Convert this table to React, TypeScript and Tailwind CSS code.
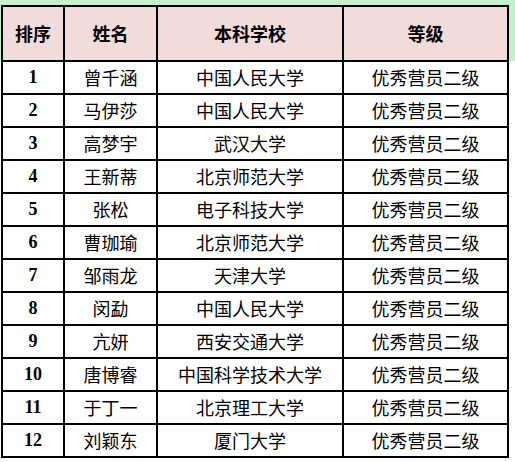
import React from 'react';

const rows = [
  { no: '1', name: '曾千涵', school: '中国人民大学' },
  { no: '2', name: '马伊莎', school: '中国人民大学' },
  { no: '3', name: '高梦宇', school: '武汉大学' },
  { no: '4', name: '王新蒂', school: '北京师范大学' },
  { no: '5', name: '张松', school: '电子科技大学' },
  { no: '6', name: '曹珈瑜', school: '北京师范大学' },
  { no: '7', name: '邹雨龙', school: '天津大学' },
  { no: '8', name: '闵勐', school: '中国人民大学' },
  { no: '9', name: '亢妍', school: '西安交通大学' },
  { no: '10', name: '唐博睿', school: '中国科学技术大学' },
  { no: '11', name: '于丁一', school: '北京理工大学' },
  { no: '12', name: '刘颖东', school: '厦门大学' },
];

const cjk = "font-['Noto_Sans_CJK_SC',sans-serif]";
const cell = 'flex items-center justify-center border-b-2 border-black';

const App = () => {
  return (
    <div className="h-[462px] w-[515px] bg-[linear-gradient(to_bottom,#c6efce_61px,#ffffff_61px)]">
      <div className="grid h-[5px] grid-cols-[64px_93px_186px_172px]">
        <div className="border-r border-[#dcf4e0]" />
        <div className="border-r border-[#dcf4e0]" />
        <div className="border-r border-[#dcf4e0]" />
        <div />
      </div>
      <div className="ml-[1px] w-[508px] border-l-2 border-r-2 border-t-2 border-black">
        <div className="grid grid-cols-[62px_93px_186px_163px] grid-rows-[55px] auto-rows-[33px] bg-white text-black">
          <div className={`${cell} ${cjk} border-r-2 bg-[#f2dcdb] text-[18px] font-bold`}>排序</div>
          <div className={`${cell} ${cjk} border-r-2 bg-[#f2dcdb] text-[18px] font-bold`}>姓名</div>
          <div className={`${cell} ${cjk} border-r-2 bg-[#f2dcdb] text-[18px] font-bold`}>本科学校</div>
          <div className={`${cell} ${cjk} bg-[#f2dcdb] text-[18px] font-bold`}>等级</div>
          {rows.map((row) => (
            <React.Fragment key={row.no}>
              <div className={`${cell} border-r-2 font-['Liberation_Serif',serif] text-[18px] font-bold`}>
                {row.no}
              </div>
              <div className={`${cell} ${cjk} border-r-2 text-[18px]`}>{row.name}</div>
              <div className={`${cell} ${cjk} border-r-2 text-[18px]`}>{row.school}</div>
              <div className={`${cell} ${cjk} text-[18px]`}>优秀营员二级</div>
            </React.Fragment>
          ))}
        </div>
      </div>
    </div>
  );
};

export default App;
